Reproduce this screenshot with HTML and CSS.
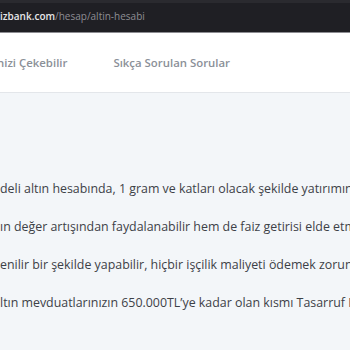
FILE: index.html
```html
<!DOCTYPE html>
<html lang="tr">
<head>
<meta charset="utf-8">
<link rel="stylesheet" href="styles.css">
</head>
<body>
<div class="browserbar">
  <div class="urlrow"><span class="host">izbank.com</span><span class="path">/hesap/altin-hesabi</span></div>
</div>
<nav class="tabs">
  <span class="tab first">nizi Çekebilir</span>
  <span class="tab">Sıkça Sorulan Sorular</span>
</nav>
<main class="content">
  <p class="line">deli altın hesabında, 1 gram ve katları olacak şekilde yatırımınızı yapabilirsiniz.</p>
  <p class="line">ın değer artışından faydalanabilir hem de faiz getirisi elde etmiş olursunuz.</p>
  <p class="line">enilir bir şekilde yapabilir, hiçbir işçilik maliyeti ödemek zorunda kalmazsınız.</p>
  <p class="line">ltın mevduatlarınızın 650.000TL’ye kadar olan kısmı Tasarruf Mevduatı Sigorta Fonu güvencesindedir.</p>
</main>
</body>
</html>
```
FILE: styles.css
```css
html, body {
  margin: 0;
  padding: 0;
  width: 350px;
  height: 350px;
  overflow: hidden;
  background: #f3f6f9;
  font-family: "Open Sans", "Noto Sans", sans-serif;
}
.browserbar {
  background: #1f1f24;
  border-top: 3px solid #2a2a2f;
  border-bottom: 1px solid #8d8d92;
  box-sizing: border-box;
  height: 33px;
}
.urlrow {
  padding: 5px 0 0 0;
  font-size: 10px;
  line-height: 16px;
  white-space: nowrap;
  overflow: hidden;
}
.host { color: #e6e6e8; font-weight: 600; }
.path { color: #8e8e94; }
.tabs {
  height: 60px;
  background: #ffffff;
  border-bottom: 1px solid #e3e6ea;
  box-sizing: border-box;
  display: flex;
  align-items: center;
  gap: 46px;
  white-space: nowrap;
  overflow: hidden;
}
.tab {
  font-size: 11.4px;
  font-weight: 600;
  color: #8b9098;
}
.tab.first { margin-left: -3px; }
.content {
  padding-top: 85px;
  overflow: hidden;
}
.line {
  margin: 0 0 17px 0;
  font-size: 12.4px;
  line-height: 21px;
  color: #3d4147;
  white-space: nowrap;
  overflow: hidden;
}
```
